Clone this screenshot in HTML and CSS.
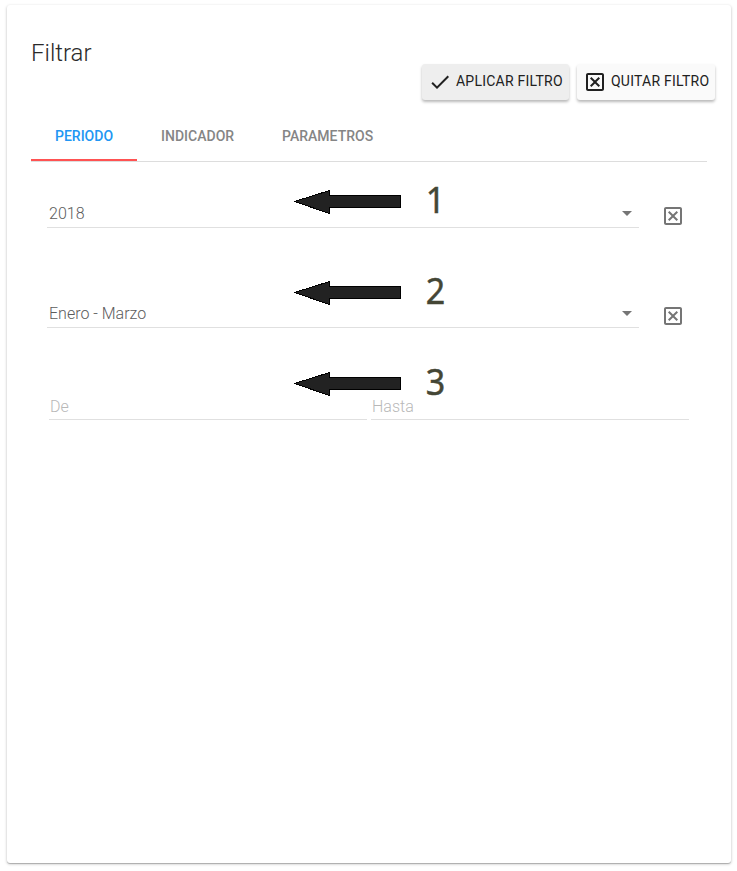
FILE: index.html
```html
<!DOCTYPE html>
<html lang="es">
<head>
<meta charset="utf-8">
<title>Filtrar</title>
<link rel="stylesheet" href="styles.css">
</head>
<body>
<svg width="0" height="0" class="defs" aria-hidden="true">
  <symbol id="box-x" viewBox="0 0 24 24"><path d="M19 3H5c-1.100 0-2 .9-2 2v14c0 1.100.9 2 2 2h14c1.100 0 2-.9 2-2V5c0-1.100-.9-2-2-2zm0 16H5V5h14v14zM17 8.400L13.400 12l3.600 3.600-1.400 1.400-3.600-3.600L8.400 17 7 15.600l3.600-3.600L7 8.400 8.400 7l3.600 3.600L15.600 7z"/></symbol>
  <symbol id="check" viewBox="0 0 24 24"><path d="M9 16.170L4.830 12l-1.420 1.410L9 19 21 7l-1.410-1.410z"/></symbol>
  <symbol id="arrow" viewBox="0 0 108 26"><path d="M.5 12.500L35.500 1.500V6.500H106.500V18.500H35.500V24.500Z" fill="#222" stroke="#000" shape-rendering="crispEdges"/></symbol>
</svg>
<main class="card">
  <h1 class="title">Filtrar</h1>
  <div class="actions">
    <button class="btn btn-focused"><svg class="icon"><use href="#check"/></svg><span>APLICAR FILTRO</span></button>
    <button class="btn"><svg class="icon"><use href="#box-x"/></svg><span>QUITAR FILTRO</span></button>
  </div>
  <nav class="tabs">
    <a class="tab active">PERIODO</a>
    <a class="tab">INDICADOR</a>
    <a class="tab">PARAMETROS</a>
  </nav>
  <section class="fields">
    <div class="row">
      <div class="select"><span>2018</span><i class="caret"></i></div>
      <svg class="icon clear"><use href="#box-x"/></svg>
      <div class="note"><svg><use href="#arrow"/></svg><b>1</b></div>
    </div>
    <div class="row">
      <div class="select"><span>Enero - Marzo</span><i class="caret"></i></div>
      <svg class="icon clear"><use href="#box-x"/></svg>
      <div class="note note-second"><svg><use href="#arrow"/></svg><b>2</b></div>
    </div>
    <div class="range">
      <div class="input">De</div>
      <div class="input">Hasta</div>
      <div class="note note-third"><svg><use href="#arrow"/></svg><b>3</b></div>
    </div>
  </section>
</main>
</body>
</html>
```
FILE: styles.css
```css
* { box-sizing: border-box; }
body { margin: 0; min-height: 871px; padding: 5px 0 0 7px; background: #fff; font-family: Roboto, sans-serif; }
.defs { position: absolute; }
.card {
  width: 724px;
  height: 858px;
  padding: 32px 16px 0 24px;
  border-radius: 3px;
  background: #fff;
  box-shadow: 0 1px 0 rgba(0,0,0,.15), 0 1px 3px rgba(0,0,0,.28);
}
.title { margin: 0; height: 27px; font-size: 24px; line-height: 32px; font-weight: 300; color: #2a2a2a; }
.actions { display: flex; justify-content: flex-end; gap: 8px; }
.btn {
  display: flex;
  align-items: center;
  width: 138px;
  height: 36px;
  padding: 0 0 0 6px;
  border: 0;
  border-radius: 3px;
  background: #fafafa;
  color: #212121;
  font: 450 14px/34px Roboto, sans-serif;
  letter-spacing: .24px;
  white-space: nowrap;
  box-shadow: 0 2px 3px rgba(0,0,0,.28);
}
.btn span { height: 36px; }
.btn-focused { width: 147px; background: #eee; }
.icon { display: block; flex: none; width: 24px; height: 24px; fill: currentColor; }
.btn .icon { margin-right: 4px; }
.tabs { display: flex; width: 676px; height: 50px; margin-top: 12px; border-bottom: 1px solid #ddd; }
.tab {
  height: 49px;
  padding: 0 24px;
  color: #858585;
  font-size: 14px;
  line-height: 48px;
  font-weight: 500;
}
.active { color: #2196f3; border-bottom: 2px solid #ff5252; }
.fields { padding: 30px 0 0 16px; }
.row { position: relative; display: flex; height: 100px; gap: 22px; }
.select {
  display: flex;
  justify-content: space-between;
  width: 592px;
  height: 36px;
  padding: 8px 7px 0 2px;
  border-bottom: 1px solid #e0e0e0;
  color: #5c5c5c;
  font-size: 16px;
  line-height: 28px;
  font-weight: 300;
}
.caret { width: 10px; height: 5px; margin-top: 11px; background: #757575; clip-path: polygon(0 0, 100% 0, 50% 100%); }
.clear { margin-top: 12px; color: #757575; }
.range { position: relative; display: flex; gap: 4px; margin-left: 2px; }
.input {
  width: 318px;
  height: 28px;
  padding-left: 1px;
  border-bottom: 1px solid #e0e0e0;
  color: #b8b8b8;
  font-size: 16px;
  line-height: 29px;
  font-weight: 300;
}
.note { position: absolute; left: 247px; top: -3px; display: flex; gap: 23px; height: 26px; align-items: flex-start; }
.note svg { width: 108px; height: 26px; }
.note b { margin-top: -3px; font: 400 37px/26px "Noto Sans", sans-serif; color: #444635; -webkit-text-stroke: .5px #444635; transform: scaleX(.92); }
.note-second { top: -12px; }
.note-third { left: 245px; top: -21px; }
```
